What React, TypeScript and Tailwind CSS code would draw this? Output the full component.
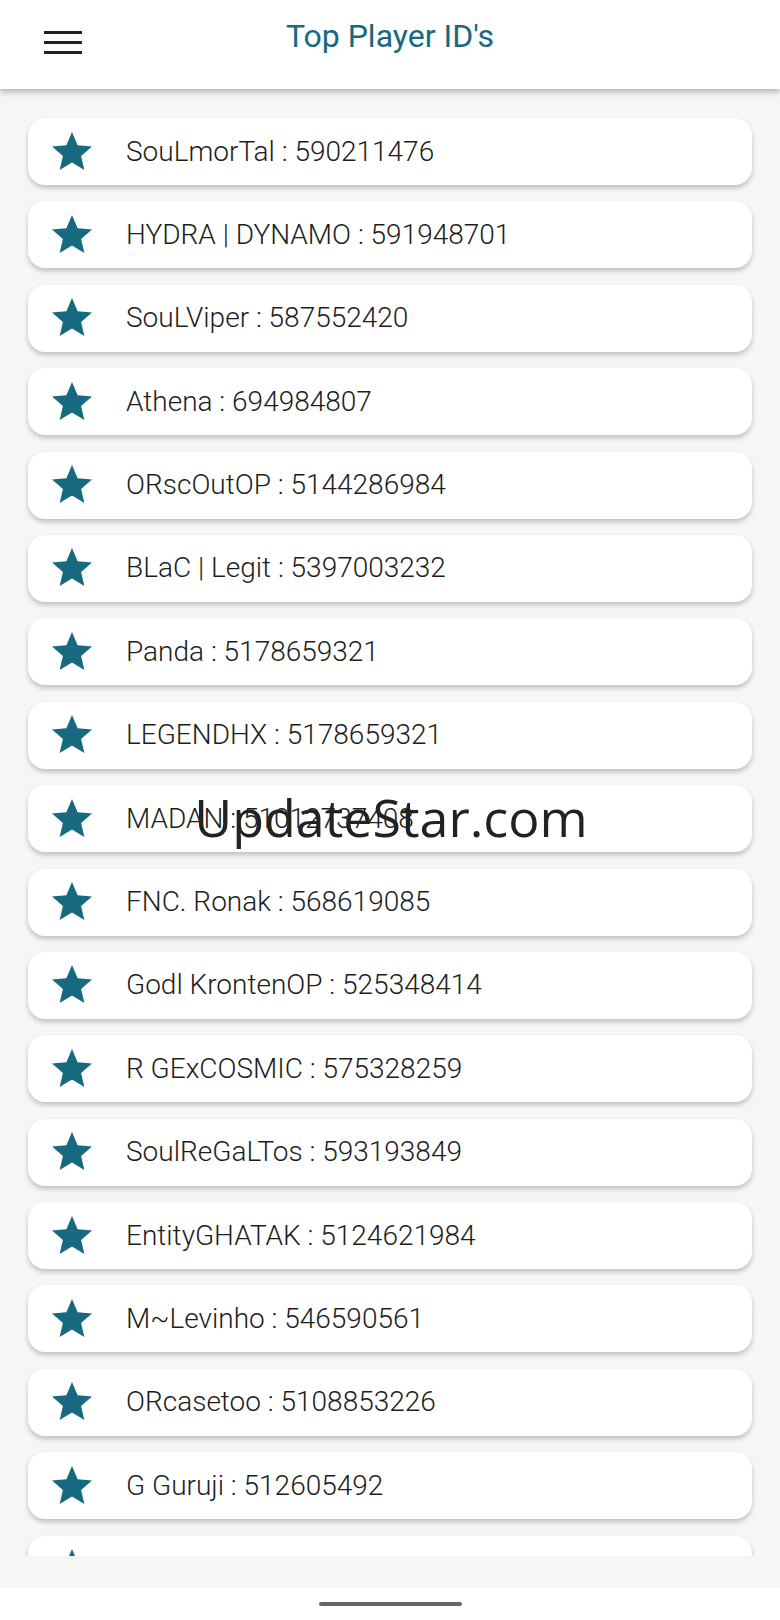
const players = [
  "SouLmorTal : 590211476",
  "HYDRA | DYNAMO : 591948701",
  "SouLViper : 587552420",
  "Athena : 694984807",
  "ORscOutOP : 5144286984",
  "BLaC | Legit : 5397003232",
  "Panda : 5178659321",
  "LEGENDHX : 5178659321",
  "MADAN : 51012737408",
  "FNC. Ronak : 568619085",
  "Godl KrontenOP : 525348414",
  "R GExCOSMIC : 575328259",
  "SoulReGaLTos : 593193849",
  "EntityGHATAK : 5124621984",
  "M~Levinho : 546590561",
  "ORcasetoo : 5108853226",
  "G Guruji : 512605492",
  "Zeus : 5126054921",
];

const Star = () => (
  <svg viewBox="0 0 24 24" className="w-12 h-12 shrink-0" fill="#17697f">
    <path d="M12 17.27 18.18 21l-1.64-7.03L22 9.24l-7.19-.61L12 2 9.19 8.63 2 9.24l5.46 4.73L5.82 21z" />
  </svg>
);

export default function App() {
  return (
    <div className="w-[780px] h-[1620px] bg-[#f6f6f6] flex flex-col relative overflow-hidden font-['Roboto',sans-serif]">
      {/* Header */}
      <header className="h-[89px] shrink-0 bg-white flex items-start relative z-10 shadow-[0_3px_6px_rgba(0,0,0,0.28)]">
        <button className="ml-[44px] mt-[31px] w-[38px] flex flex-col gap-[7px]">
          <span className="h-[3px] bg-[#222]" />
          <span className="h-[3px] bg-[#222]" />
          <span className="h-[3px] bg-[#222]" />
        </button>
        <h1 className="absolute left-0 right-0 top-[12px] text-center text-[32px] text-[#17697f]">
          Top Player ID's
        </h1>
      </header>

      {/* List */}
      <div className="flex-1 overflow-hidden pt-[29px] px-[28px]">
        <div className="flex flex-col gap-[16.4px]">
          {players.map((p) => (
            <div
              key={p}
              className="h-[67px] shrink-0 bg-white rounded-[17px] flex items-center pl-[20px] shadow-[0_3px_5px_rgba(0,0,0,0.22)]"
            >
              <Star />
              <span className="ml-[30px] text-[28px] font-light text-[#1d1d1d] whitespace-nowrap">
                {p}
              </span>
            </div>
          ))}
        </div>
      </div>
      <div className="h-[32px] shrink-0 bg-[#f6f6f6]" />

      {/* Bottom nav */}
      <div className="h-[32px] shrink-0 bg-white flex items-center justify-center">
        <div className="w-[143px] h-[4px] rounded-full bg-[#666]" />
      </div>

      {/* Watermark */}
      <div className="absolute left-0 right-0 top-[778px] text-center font-['Open_Sans',sans-serif] text-[52px] text-[#222] pl-[2px]">
        UpdateStar.com
      </div>
    </div>
  );
}
